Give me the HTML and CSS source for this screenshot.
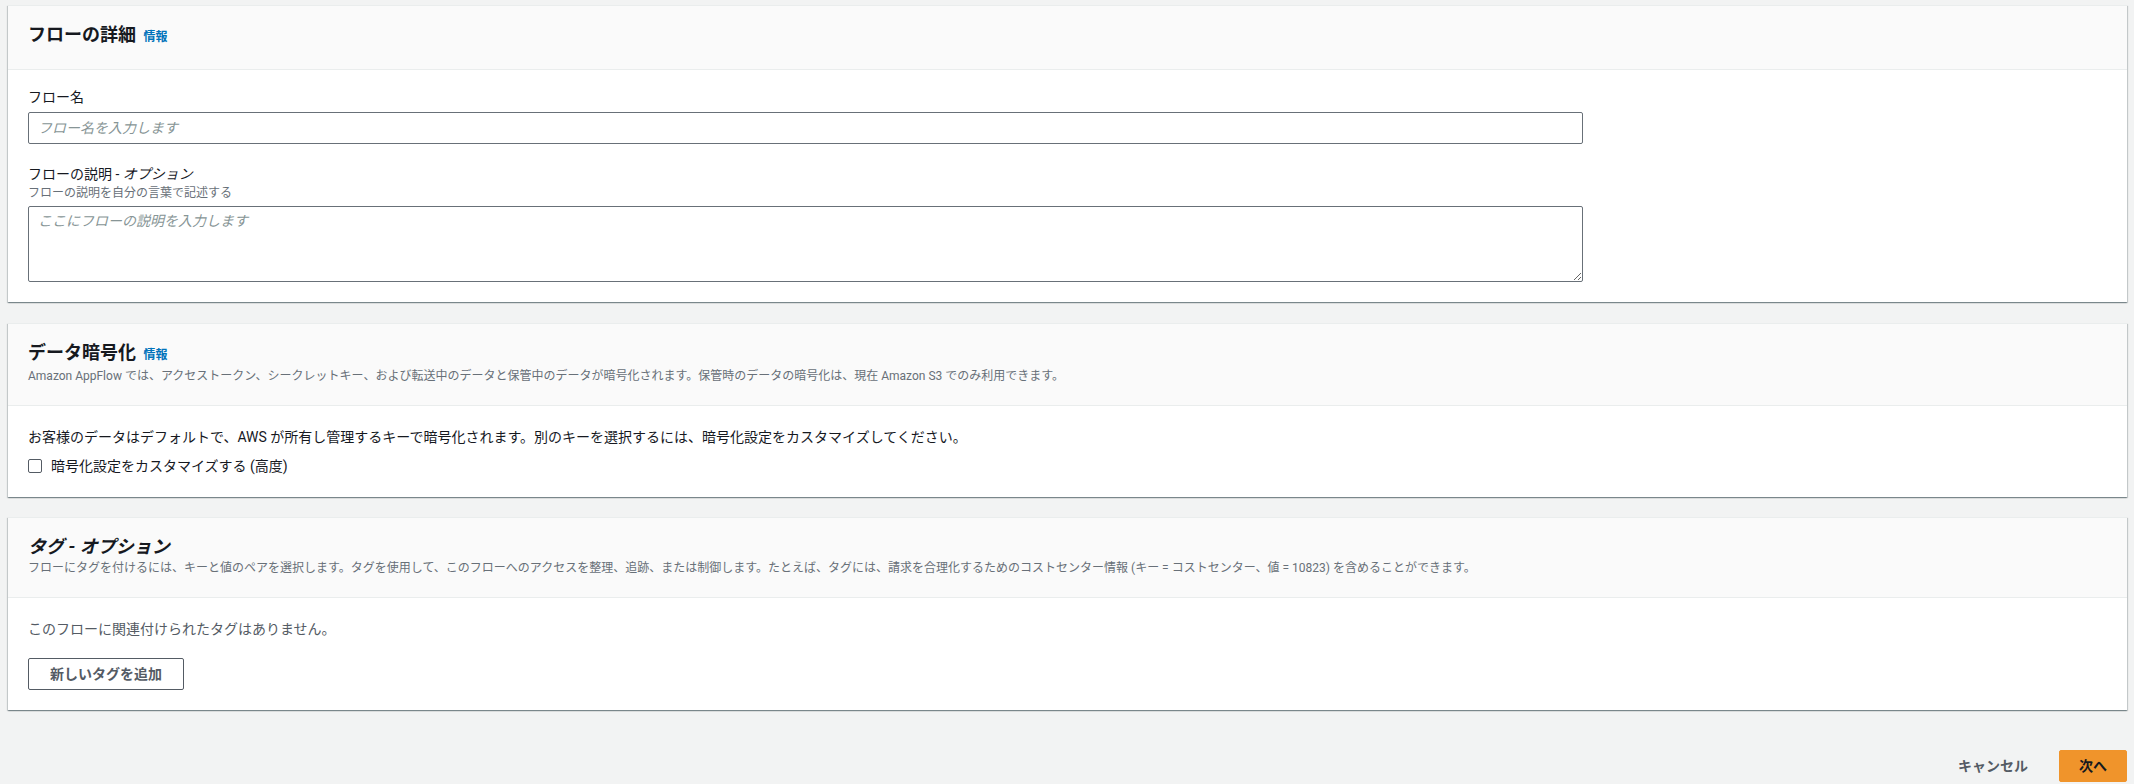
FILE: index.html
```html
<!DOCTYPE html>
<html lang="ja">
<head>
<meta charset="utf-8">
<title>フローの詳細</title>
<link rel="stylesheet" href="styles.css">
</head>
<body>
<div class="page">
  <section class="card">
    <header class="card-header">
      <h2 class="card-title">フローの詳細 <a class="info" href="#">情報</a></h2>
    </header>
    <div class="card-body card-body-form">
      <div class="field">
        <label class="label" for="flow-name">フロー名</label>
        <input class="input" id="flow-name" type="text" placeholder="フロー名を入力します">
      </div>
      <div class="field field-gap">
        <label class="label" for="flow-desc">フローの説明 - <i>オプション</i></label>
        <div class="field-desc">フローの説明を自分の言葉で記述する</div>
        <textarea class="textarea" id="flow-desc" placeholder="ここにフローの説明を入力します"></textarea>
      </div>
    </div>
  </section>

  <section class="card card-gap">
    <header class="card-header card-header-desc">
      <h2 class="card-title">データ暗号化 <a class="info" href="#">情報</a></h2>
      <p class="card-desc">Amazon AppFlow では、アクセストークン、シークレットキー、および転送中のデータと保管中のデータが暗号化されます。保管時のデータの暗号化は、現在 Amazon S3 でのみ利用できます。</p>
    </header>
    <div class="card-body">
      <p class="text">お客様のデータはデフォルトで、AWS が所有し管理するキーで暗号化されます。別のキーを選択するには、暗号化設定をカスタマイズしてください。</p>
      <label class="check-row">
        <input class="checkbox" type="checkbox">
        <span>暗号化設定をカスタマイズする (高度)</span>
      </label>
    </div>
  </section>

  <section class="card card-gap2">
    <header class="card-header card-header-desc">
      <h2 class="card-title italic">タグ - オプション</h2>
      <p class="card-desc">フローにタグを付けるには、キーと値のペアを選択します。タグを使用して、このフローへのアクセスを整理、追跡、または制御します。たとえば、タグには、請求を合理化するためのコストセンター情報 (キー = コストセンター、値 = 10823) を含めることができます。</p>
    </header>
    <div class="card-body">
      <p class="text muted">このフローに関連付けられたタグはありません。</p>
      <button class="btn btn-normal" type="button">新しいタグを追加</button>
    </div>
  </section>

  <div class="footer">
    <button class="btn btn-link" type="button">キャンセル</button>
    <button class="btn btn-primary" type="button">次へ</button>
  </div>
</div>
</body>
</html>
```

FILE: styles.css
```css
* {
  box-sizing: border-box;
}

html, body {
  margin: 0;
  padding: 0;
  background: #f2f3f3;
}

body {
  font-family: Roboto, "Noto Sans CJK JP", sans-serif;
  font-size: 14px;
  line-height: 22px;
  color: #16191f;
  overflow: hidden;
}

.page {
  padding: 5px 7px 0 8px;
}

.card {
  background: #ffffff;
  border-top: 1px solid #eaeded;
  box-shadow: 0 1px 1px 0 rgba(0, 28, 36, 0.3),
              1px 1px 1px 0 rgba(0, 28, 36, 0.15),
              -1px 1px 1px 0 rgba(0, 28, 36, 0.15);
}

.card-gap {
  margin-top: 21px;
}

.card-gap2 {
  margin-top: 20px;
}

.card-header {
  background: #fafafa;
  border-bottom: 1px solid #eaeded;
  padding: 17px 20px 20px;
}

.card-title {
  margin: 0;
  font-size: 18px;
  line-height: 24px;
  font-weight: 700;
  color: #16191f;
}

.card-title.italic {
  font-style: italic;
}

.info {
  font-size: 12px;
  font-weight: 700;
  color: #0073bb;
  text-decoration: none;
  margin-left: 3px;
  font-style: normal;
}

.card-desc {
  margin: 0;
  font-size: 12px;
  line-height: 18px;
  color: #687078;
}

.card-body {
  padding: 20px 20px 20px;
}

.card-body-form {
  padding-top: 16px;
}

.field {
  display: flex;
  flex-direction: column;
}

.field-gap {
  margin-top: 19px;
}

.label {
  font-size: 14px;
  line-height: 22px;
  color: #16191f;
}

.field-desc {
  font-size: 12px;
  line-height: 16px;
  color: #687078;
}

.input,
.textarea {
  width: 1555px;
  font-family: Roboto, "Noto Sans CJK JP", sans-serif;
  font-size: 14px;
  color: #16191f;
  background: #ffffff;
  border: 1px solid #687078;
  border-radius: 2px;
  outline: none;
}

.input {
  height: 32px;
  margin-top: 4px;
  padding: 4px 9px;
  line-height: 22px;
}

.textarea {
  height: 76px;
  margin-top: 5px;
  padding: 3px 9px;
  line-height: 22px;
  resize: vertical;
}

.input::placeholder,
.textarea::placeholder {
  color: #879596;
  font-style: italic;
}

.text {
  margin: 0;
  font-size: 14px;
  line-height: 22px;
  color: #16191f;
}

.text.muted {
  color: #545b64;
}

.check-row {
  display: flex;
  align-items: center;
  gap: 9px;
  margin-top: 7px;
  line-height: 22px;
  cursor: pointer;
}

.checkbox {
  appearance: none;
  -webkit-appearance: none;
  width: 14px;
  height: 14px;
  margin: 0;
  border: 1px solid #545b64;
  border-radius: 2px;
  background: #ffffff;
}

.btn {
  font-family: Roboto, "Noto Sans CJK JP", sans-serif;
  font-size: 14px;
  font-weight: 700;
  line-height: 22px;
  padding: 4px 20px;
  border-radius: 2px;
  cursor: pointer;
}

.btn-normal {
  margin-top: 18px;
  padding: 4px 21px;
  background: #ffffff;
  color: #545b64;
  border: 1px solid #545b64;
}

.footer {
  display: flex;
  justify-content: flex-end;
  align-items: center;
  gap: 10px;
  margin-top: 40px;
}

.btn-link {
  background: transparent;
  border: 1px solid transparent;
  color: #545b64;
}

.btn-primary {
  background: #f0942b;
  border: 1px solid #f0942b;
  color: #16191f;
  padding: 4px 19px;
}
```
